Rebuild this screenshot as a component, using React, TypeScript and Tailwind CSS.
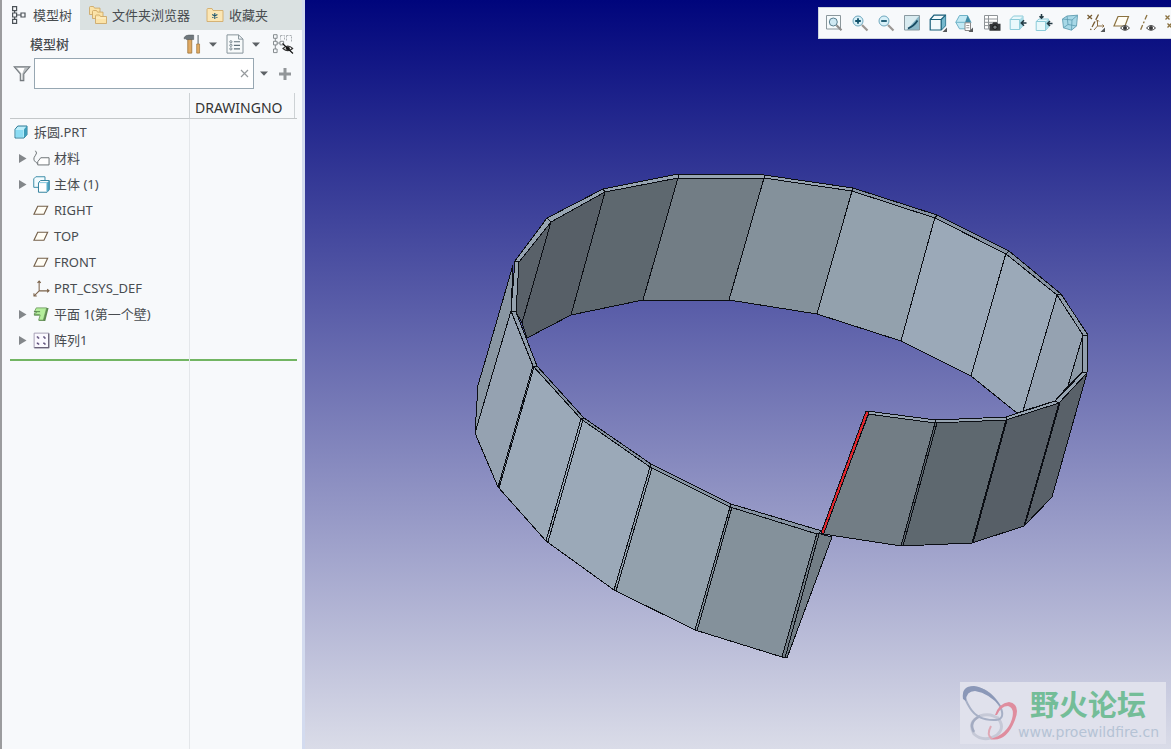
import type { ReactNode } from 'react';
import clsx from 'clsx';

interface IconProps {
  size?: number;
  children: ReactNode;
}

function Icon({ size = 18, children }: IconProps) {
  return (
    <svg width={size} height={size} viewBox="0 0 18 18" fill="none" className="block shrink-0">
      {children}
    </svg>
  );
}

function Caret() {
  return (
    <svg width="8" height="5" viewBox="0 0 8 5" className="block">
      <path d="M0 .5h8L4 4.8z" fill="#5c6165" />
    </svg>
  );
}

/* Panel icons */
const TreeTabIcon = () => (
  <Icon>
    <g stroke="#4c5358" strokeWidth="1.2">
      <path d="M2.6.6h4v4h-4zM2.6 7h4v4h-4zM2.6 13.4h4v4h-4zM11 7h4v4h-4zM4.6 4.6V7M4.6 11v2.4M6.6 9H11" />
    </g>
  </Icon>
);

const FoldersIcon = () => (
  <Icon>
    <g fill="#fbe3a8" stroke="#c9a25e" strokeWidth=".8">
      <path d="M.5 1.5q0-1 1-1h3l1 1.6H11v6.4H.5z" />
      <path d="M3.5 5.5q0-1 1-1h3l1 1.6H14v6.4H3.5z" />
      <path d="M6.5 10q0-1 1-1h3l1 1.5h6v7h-11z" />
    </g>
    <path d="M7 12h10" stroke="#fff3d0" />
  </Icon>
);

const FavoritesIcon = () => (
  <Icon>
    <path d="M1 3.5q0-1 1-1h4l1 2h10v11H1z" fill="#fbe6b4" stroke="#d3ad6b" strokeWidth=".9" />
    <path d="M8.8 7v6M6.2 8.5l5.2 3M11.4 8.5l-5.2 3" stroke="#1c5570" strokeWidth="1.1" />
  </Icon>
);

const ToolsIcon = () => (
  <Icon size={20}>
    <path d="M5.2 4.2h3.6v13H5.2z" fill="#e0aa63" stroke="#9b7136" strokeWidth=".7" />
    <path d="M2 4.5V3q1.5-2 4-2h4.5v4H4.5q-1 0-1.6-.9z" fill="#6f787d" stroke="#53595d" strokeWidth=".5" />
    <path d="M14.5 1v8" stroke="#7d868b" strokeWidth="1.2" />
    <path d="M13.2 9h2.6v8.2h-2.6z" fill="#e0aa63" stroke="#9b7136" strokeWidth=".6" />
  </Icon>
);

const ListIcon = () => (
  <Icon size={20}>
    <path d="M1.8.8h10.4l4 3.8v12.6H1.8z" fill="#f7fafb" stroke="#87949b" strokeWidth=".9" />
    <path d="M12.2.8v3.8h4" stroke="#87949b" strokeWidth=".9" />
    <path d="M8 7h5.5M8 10.2h5.5M8 13.4h5.5" stroke="#5f7079" />
    <g stroke="#5f7079" strokeWidth=".7">
      <circle cx="5.3" cy="7" r="1" />
      <circle cx="5.3" cy="10.2" r="1" />
      <circle cx="5.3" cy="13.4" r="1" />
    </g>
  </Icon>
);

const HideTreeIcon = () => (
  <svg width="22" height="20" viewBox="0 0 22 20" fill="none" className="block">
    <path d="M1.5.7h3.6v3.6H1.5zM1.5 7.3h3.6v3.6H1.5zM1.5 15h3.6v3.6H1.5zM8 7.3h3.6v3.6H8zM3.3 4.3v3M3.3 11v4M5 9h3" stroke="#7b8185" strokeWidth=".9" />
    <path d="M8.5 1.5h4v4M14.5 1.5h5v6M8.5 1.5v4M14.5 1.5v6" stroke="#a9aeb2" strokeDasharray="2 1" />
    <path d="M11 14.5q4.8-5 9.6 0q-4.8 4.4-9.6 0z" fill="#fff" stroke="#333" strokeWidth="1.2" />
    <circle cx="15.8" cy="14.3" r="2" fill="#222" />
    <path d="M10.5 9.5l10.5 10" stroke="#111" strokeWidth="1.1" />
  </svg>
);

const FilterIcon = () => (
  <Icon>
    <path d="M1.2 1.8h15.6l-6 7.2v6.6H7.3V9z" fill="#b9bec1" stroke="#73797d" strokeWidth="1.1" />
    <path d="M4 3h7.5L9.2 9v5.5h-.8V8.6z" fill="#fff" />
  </Icon>
);

/* Tree icons */
const PartIcon = () => (
  <svg width="14" height="14" viewBox="0 0 14 14" className="block">
    <path d="M1 4.3L3.8 1H13v8.6L10 13H1z" fill="#bdeefa" stroke="#2c7b96" />
    <path d="M10 4.3L13 1v8.6L10 13z" fill="#3d9dba" />
    <path d="M1.8 5h7.5v7.2H1.8z" fill="#8bdcf3" />
  </svg>
);

const MaterialIcon = () => (
  <Icon size={17}>
    <path d="M2.6.8q2.4 2.4 0 4.8-3.6 4.4.4 7.4l2 1.6" stroke="#666c70" />
    <path d="M8.2 8.2H17v7.6H5v-3.4z" fill="#fff" stroke="#666c70" />
  </Icon>
);

const BodyIcon = () => (
  <Icon size={17}>
    <path d="M.8 3L3 .8h9.7v9L10.5 12H.8z" fill="#f2fbfe" stroke="#3488a5" />
    <path d="M5.8 7L8 4.8h9.3v9.7l-2.4 2.7H5.8z" fill="#fff" stroke="#2b7c99" />
    <path d="M14.7 7.2L17 5v9.5l-2.3 2.4z" fill="#489fbd" />
    <path d="M6 7h8.7v9.5" stroke="#7fc5db" />
  </Icon>
);

const PlaneIcon = () => (
  <Icon size={17}>
    <path d="M5 4.5h10.5L11.6 13H1z" fill="#fffdf5" stroke="#74604a" strokeWidth="1.2" />
  </Icon>
);

const CsysIcon = () => (
  <Icon size={17}>
    <path d="M6.5 1v10.5H17M6.5 11.5L1 17M4.8 3l1.7-2 1.7 2M15 9.8l2 1.7-2 1.7M1 14v3h3" stroke="#7b6249" strokeWidth="1.1" />
  </Icon>
);

const WallIcon = () => (
  <Icon size={17}>
    <path d="M3.5 2H14.500L11 15H6l1.6-5.5H1.5v-2h2V6h-2z" fill="#b4ee9c" stroke="#6b9a5c" strokeWidth=".9" />
    <path d="M14.500 2h2L13 15.8H6.500l-.5-.8h5z" fill="#5d8a50" />
    <path d="M1 6h6.5M1 9.5h6" stroke="#55834a" />
  </Icon>
);

const PatternIcon = () => (
  <Icon size={17}>
    <path d="M1.2 1.2h15.6v15.6H1.2z" fill="#fbf9ff" stroke="#a39cb2" />
    <path d="M16.6 1.5v15.1H1.5" stroke="#696178" strokeWidth="1.3" />
    <path d="M4 4.6h1.6v1H6.6v1.6H5v-1H4zM10.8 4.6h1.6v1h1v1.6h-1.6v-1h-1zM4 11h1.6v1h1v1.6H5v-1H4zM10.8 11h1.6v1h1v1.6h-1.6v-1h-1z" fill="#5b4d78" />
  </Icon>
);

/* View toolbar icons */
const Corner = () => <path d="M18 13.5V18h-4.5z" fill="#55585b" />;

const toolbarGroups: { label: string; icon: ReactNode }[][] = [
  [
    {
      label: '重新调整',
      icon: (
        <Icon>
          <path d="M1.5 1.5h14v13.5h-14z" fill="#f6fbfc" stroke="#8b979c" />
          <circle cx="8.3" cy="8" r="4" fill="#cfe9f3" stroke="#5a7f8f" />
          <path d="M11.5 11.2l5 5" stroke="#8d8c8b" strokeWidth="2.2" />
        </Icon>
      ),
    },
    {
      label: '放大',
      icon: (
        <Icon>
          <circle cx="7" cy="7" r="5" fill="#d8f0f8" stroke="#6fa8be" />
          <path d="M4.2 7h5.6M7 4.2v5.6" stroke="#12526b" strokeWidth="1.8" />
          <path d="M11 11l5.5 5.5" stroke="#9b9793" strokeWidth="2.2" />
        </Icon>
      ),
    },
    {
      label: '缩小',
      icon: (
        <Icon>
          <circle cx="7" cy="7" r="5" fill="#d8f0f8" stroke="#6fa8be" />
          <path d="M4.2 7h5.6" stroke="#12526b" strokeWidth="1.8" />
          <path d="M11 11l5.5 5.5" stroke="#9b9793" strokeWidth="2.2" />
        </Icon>
      ),
    },
    {
      label: '重画',
      icon: (
        <Icon>
          <path d="M1.5 1.5h15v14.5h-15z" fill="#8cb9c8" stroke="#8b9ba2" />
          <path d="M2 2h14L4 15.5H2z" fill="#d9ebf0" />
          <path d="M5 14.5Q11 12 14.500 6.500" stroke="#174b63" strokeWidth="1.8" />
        </Icon>
      ),
    },
    {
      label: '显示样式',
      icon: (
        <Icon>
          <path d="M1.2 5.5L5 1.2h11.5v10.3L12.2 16H1.2z" fill="#f3fafc" stroke="#185e79" strokeWidth="1.2" />
          <path d="M12.2 5.5l4.3-4.3v10.3L12.2 16z" fill="#75b8cd" />
          <path d="M1.2 5.5h11V16M12.2 5.5l4.3-4.3" stroke="#185e79" strokeWidth="1.2" />
          <Corner />
        </Icon>
      ),
    },
    {
      label: '已保存方向',
      icon: (
        <Icon>
          <path d="M.8 8.3L4.5 1.5h8L16 8.3l-3.5 6.5h-8z" fill="#c3e9f4" stroke="#6fb3c8" />
          <path d="M.8 8.3H10" stroke="#6fb3c8" />
          <path d="M12.5 1.5L16 8.5h-6z" fill="#3f8ba6" />
          <path d="M10 8.8h5.5v7.7H10z" fill="#fff" stroke="#888" />
          <path d="M11.3 11.5h3M11.3 13.8h3" stroke="#999" />
          <Corner />
        </Icon>
      ),
    },
  ],
  [
    {
      label: '视图管理器',
      icon: (
        <Icon>
          <path d="M1.5 1.5h13v13.5h-13z" fill="#fff" />
          <path d="M1.5 1.5h13v13.5h-13zM1.5 5h13M1.5 8.3h13M1.5 11.6h7M5.5 1.5V15" stroke="#8f9498" />
          <path d="M6.5 9.8h2.7l1-1.6h3.6l1 1.6h2.7v7h-11z" fill="#343638" />
          <circle cx="12" cy="13.2" r="2.2" fill="#777c7f" stroke="#111" />
        </Icon>
      ),
    },
    {
      label: '截面',
      icon: (
        <Icon>
          <path d="M1.2 5.5L4.5 2H14v9.8L10.6 15.5H1.2z" fill="#e9f8fb" stroke="#8ccbd9" />
          <path d="M10.6 5.5L14 2v9.8l-3.4 3.7z" fill="#a8dbe6" />
          <path d="M1.2 5.5h9.4v10" stroke="#8ccbd9" />
          <path d="M17.5 9h-5M15 6.3L12.3 9l2.7 2.7" stroke="#243b45" strokeWidth="1.6" />
        </Icon>
      ),
    },
    {
      label: '平面截面',
      icon: (
        <Icon>
          <path d="M1.2 7.5L4 5h9.5v8l-3 3.5H1.2z" fill="#e9f8fb" stroke="#8ccbd9" />
          <path d="M10.5 7.5l3-2.5v8l-3 3.5z" fill="#a8dbe6" />
          <path d="M1.2 7.5h9.3v9" stroke="#8ccbd9" />
          <path d="M6.5 0v4M4.5 2.3l2 2 2-2M17.5 9.5h-5M15 7l-2.5 2.5L15 12" stroke="#243b45" strokeWidth="1.5" />
        </Icon>
      ),
    },
    {
      label: '透视图',
      icon: (
        <Icon>
          <path d="M1.5 5L6 2l10.5-.8-1 10.8-5 4.2-8-2.4z" fill="#a7d8e7" stroke="#6ba5b8" />
          <path d="M1.5 5L11 6l5.5-4.8M11 6l-.5 10M6 2l1 8.5-4.5 3.3M7 10.5l8.5 1.5" stroke="#5b9ab0" strokeWidth=".8" />
        </Icon>
      ),
    },
    {
      label: '基准显示过滤器',
      icon: (
        <Icon>
          <path d="M.5 1l4.5 4M5 1L.5 5M11.5.5L3.5 16" stroke="#765b32" strokeWidth="1.3" strokeDasharray="6 2" />
          <path d="M10.5 6v6H17M10.5 12L7 16M9 7.5L10.5 6 12 7.5M15.5 10.5L17 12l-1.5 1.5" stroke="#8b6e45" />
          <Corner />
        </Icon>
      ),
    },
    {
      label: '平面显示',
      icon: (
        <Icon>
          <path d="M5 2.5h10.5L12 12H1z" fill="#fffdf5" stroke="#8b7240" strokeWidth="1.2" />
          <path d="M7.5 14q4.5-5 9 0q-4.5 4.6-9 0z" fill="#fff" stroke="#444" />
          <circle cx="12" cy="13.9" r="2" fill="#383838" />
        </Icon>
      ),
    },
    {
      label: '轴显示',
      icon: (
        <Icon>
          <path d="M8 1L1.5 16" stroke="#8b7240" strokeWidth="1.3" strokeDasharray="5 2 2 2" />
          <path d="M7.5 14q4.5-5 9 0q-4.5 4.6-9 0z" fill="#fff" stroke="#444" />
          <circle cx="12" cy="13.9" r="2" fill="#383838" />
        </Icon>
      ),
    },
    {
      label: '点显示',
      icon: (
        <Icon>
          <path d="M.5 1.5l4 4M4.5 1.5l-4 4M2.5 9.5l4 4M6.5 9.5l-4 4" stroke="#8b7240" strokeWidth="1.3" />
        </Icon>
      ),
    },
  ],
];

const tabs = [
  { label: '模型树', icon: <TreeTabIcon />, active: true },
  { label: '文件夹浏览器', icon: <FoldersIcon />, active: false },
  { label: '收藏夹', icon: <FavoritesIcon />, active: false },
];

const treeItems = [
  { name: '材料', icon: <MaterialIcon />, expandable: true },
  { name: '主体 (1)', icon: <BodyIcon />, expandable: true },
  { name: 'RIGHT', icon: <PlaneIcon />, expandable: false },
  { name: 'TOP', icon: <PlaneIcon />, expandable: false },
  { name: 'FRONT', icon: <PlaneIcon />, expandable: false },
  { name: 'PRT_CSYS_DEF', icon: <CsysIcon />, expandable: false },
  { name: '平面 1(第一个壁)', icon: <WallIcon />, expandable: true },
  { name: '阵列1', icon: <PatternIcon />, expandable: true },
];

// Faces of the ring, far side first
const faces: [string, string][] = [
  ['519,262 551,222 522,323 516,312', '#596169'],
  ['551,222 605,192 571,315 527,338 522,323', '#575f67'],
  ['605,192 678,178 643,300 571,315', '#5e686f'],
  ['678,178 764,178 729,300 643,300', '#727d85'],
  ['764,178 852,191 817,314 729,300', '#84919b'],
  ['852,191 935,217 901,341 817,314', '#93a1ad'],
  ['935,217 1006,253 971,376 901,341', '#9ba9b8'],
  ['1006,253 1057,295 1023,411 1017,413 971,376', '#9ba9b8'],
  ['1057,295 1083,335 1068,386 1055,401 1023,411', '#95a2b1'],
  ['1083,335 1082,372 1068,386', '#8c99a6'],
  ['1083,335 1088,335 1087,373 1082,373', '#929fad'],
  // top rim, far side
  ['515,261 547,218 551,222 519,262', '#98a5b2'],
  ['547,218 603,189 605,192 551,222', '#98a5b2'],
  ['603,189 678,174 678,178 605,192', '#98a5b2'],
  ['678,174 764,175 764,178 678,178', '#98a5b2'],
  ['764,175 853,188 852,191 764,178', '#98a5b2'],
  ['853,188 937,215 935,218 852,191', '#8794a3'],
  ['937,215 1009,251 1006,254 935,218', '#8794a3'],
  ['1009,251 1061,294 1057,295 1006,254', '#8794a3'],
  ['1061,294 1088,335 1083,335 1057,295', '#919eac'],
  // near side, left run
  ['513,265 511,311 475,433 478,385 484,365', '#8996a2'],
  ['515,261 519,262 516,312 511,311', '#95a2ae'],
  ['511,311 533,366 498,487 475,433', '#95a2b1'],
  ['533,366 581,419 546,541 498,487', '#9ba9b8'],
  ['581,419 650,467 614,590 546,541', '#9ba9b8'],
  ['650,467 730,507 695,630 614,590', '#93a1ad'],
  ['730,507 817,533 782,657 695,630', '#84919b'],
  ['817,533 832,537 787,658 782,657', '#727d85'],
  ['511,311 516,312 537,366 533,366', '#919eac'],
  ['533,366 537,366 584,418 581,419', '#8794a3'],
  ['581,419 584,418 651,464 650,467', '#8794a3'],
  ['650,467 651,464 731,504 730,507', '#8794a3'],
  ['730,507 731,504 822,531 817,534', '#8794a3'],
  // near side, right run
  ['869,413 935,423 901,546 823,534', '#727d85'],
  ['935,423 1006,420 972,543 901,546', '#5e686f'],
  ['1006,420 1059,403 1024,526 972,543', '#575f67'],
  ['1059,403 1087,373 1052,497 1024,526', '#596169'],
  ['867,411 936,420 935,423 868,414', '#98a5b2'],
  ['936,420 1006,417 1006,420 935,423', '#98a5b2'],
  ['1006,417 1055,401 1059,403 1006,420', '#98a5b2'],
  ['1055,401 1083,372 1087,373 1059,403', '#98a5b2'],
];

// Second line of every bend on the near side
const bends = [
  'M534 367L499 488',
  'M583 420L548 542',
  'M652 468L616 591',
  'M732 507L697 631',
  'M819 534L785 658',
  'M937 423L903 546',
  'M1007 420L973 543',
  'M1060 403L1025 525',
];

function ModelView() {
  return (
    <svg viewBox="305 0 866 749" className="block h-full w-full" role="img" aria-label="拆圆.PRT">
      <g stroke="#0b0e14" strokeWidth="1" strokeLinejoin="round" shapeRendering="crispEdges">
        {faces.map(([points, fill]) => (
          <polygon key={points} points={points} fill={fill} />
        ))}
        {bends.map((d) => (
          <path key={d} d={d} />
        ))}
        <polygon points="866,411 869,412 824,533 821,533" fill="#e0262e" />
      </g>
    </svg>
  );
}

function Watermark() {
  return (
    <div className="absolute right-[5px] bottom-[5px] flex h-[62px] w-[206px] items-start bg-[#e0e1ec]">
      <svg width="58" height="62" viewBox="0 0 58 62" fill="none" className="shrink-0">
        <path d="M37 35Q46 45 37 53Q24 61 14 52Q7 40 20 34Q31 30 40 38" stroke="#c6c9d7" strokeWidth="3" />
        <path d="M14 50Q8 40 20 34" stroke="#a3abc1" strokeWidth="2.5" />
        <path d="M10 26Q-2 7 12 5.5Q28 5 40 24Q46 37 36 38Q18 39 10 26z" stroke="#a7b0c6" strokeWidth="2" />
        <path d="M3 17Q1 4 14 4Q30 6 42 26Q29 11 15 9Q6 9 6 19z" fill="#8b98b8" />
        <path d="M35 33Q39 21 49 20Q61 22 55 38Q46 61 30 57Q47 53 52 37Q55 26 48 24Q41 24 37 33z" fill="#df8d9e" />
        <path d="M32 57q-6-4-1-13" stroke="#dfa8b5" strokeWidth="2" />
      </svg>
      <div className="flex flex-col whitespace-nowrap">
        <span className="pl-3 font-['Noto_Sans_CJK_SC',sans-serif] text-[29px] leading-[42px] font-bold text-[#74bd98]">
          野火论坛
        </span>
        <span className="font-['DejaVu_Sans',sans-serif] text-sm leading-4 text-[#b5c3d5]">www.proewildfire.cn</span>
      </div>
    </div>
  );
}

function Sidebar() {
  return (
    <aside className="flex w-[305px] shrink-0 flex-col border-r-[3px] border-l-2 border-r-[#d3dbef] border-l-[#9b9c9e] bg-[#f7f9fb]">
      <div role="tablist" className="flex h-[30px] shrink-0 bg-[#dae1e1]">
        {tabs.map((tab) => (
          <button
            key={tab.label}
            role="tab"
            aria-selected={tab.active}
            className={clsx(
              'flex items-center gap-[5px] whitespace-nowrap',
              tab.active ? 'bg-[#f7f9fb] pr-2 pl-2' : 'pr-[7px] pl-[9px]'
            )}
          >
            {tab.icon}
            {tab.label}
          </button>
        ))}
      </div>

      <div className="flex h-7 shrink-0 items-center pr-2 pl-7">
        <h2 className="flex-1 font-medium">模型树</h2>
        <div className="flex items-center gap-2">
          <button aria-label="设置" className="flex items-center gap-[7px]">
            <ToolsIcon />
            <Caret />
          </button>
          <button aria-label="显示" className="flex items-center gap-[7px]">
            <ListIcon />
            <Caret />
          </button>
          <button aria-label="隐藏项" className="pl-1">
            <HideTreeIcon />
          </button>
        </div>
      </div>

      <div className="flex h-[31px] shrink-0 items-center pr-[11px] pl-[11px]">
        <button aria-label="过滤器">
          <FilterIcon />
        </button>
        <div className="relative ml-[3px] h-full flex-1">
          <input
            type="text"
            aria-label="搜索"
            className="block h-full w-full border border-[#97a7b2] bg-white pr-5 pl-2 outline-none"
          />
          <button aria-label="清除" className="absolute top-0 right-[5px] flex h-full items-center">
            <svg width="9" height="9" viewBox="0 0 9 9">
              <path d="M1 1l7 7M8 1L1 8" stroke="#969a9d" strokeWidth="1.2" />
            </svg>
          </button>
        </div>
        <button aria-label="搜索选项" className="px-[6px]">
          <Caret />
        </button>
        <button aria-label="添加" className="ml-[5px]">
          <svg width="12" height="12" viewBox="0 0 12 12">
            <path d="M6 0v12M0 6h12" stroke="#929699" strokeWidth="3" />
          </svg>
        </button>
      </div>

      <div className="flex flex-1 flex-col pt-1 pr-[5px] pl-2">
        <table className="w-full table-fixed border-separate border-spacing-0">
          <colgroup>
            <col className="w-[180px]" />
            <col />
          </colgroup>
          <thead>
            <tr className="h-[26px]">
              <th aria-label="名称" className="border-r border-b border-r-[#cdd2d5] border-b-[#c3c7c9]" />
              <th className="border-b border-b-[#c3c7c9] p-0 text-left text-sm leading-5 font-normal text-[#333]">
                <div className="mr-[2px] h-[25px] border-r border-[#cdd2d5] pt-[5px] pl-[5px]">DRAWINGNO</div>
              </th>
            </tr>
          </thead>
          <tbody>
            <tr className="h-[26px]">
              <td className="border-r border-[#e4e7ea] p-0">
                <div className="flex items-center gap-[6px] pl-1">
                  <PartIcon />
                  拆圆.PRT
                </div>
              </td>
              <td />
            </tr>
            {treeItems.map((item) => (
              <tr key={item.name} className="h-[26px]">
                <td className="border-r border-[#e4e7ea] p-0">
                  <div className="flex items-center pl-[9px]">
                    <span className="w-[14px]">
                      {item.expandable && (
                        <button aria-label="展开" className="block">
                          <svg width="8" height="9" viewBox="0 0 8 9" className="block">
                            <path d="M0 0l7.5 4.5L0 9z" fill="#83878a" />
                          </svg>
                        </button>
                      )}
                    </span>
                    <span className="mr-1">{item.icon}</span>
                    {item.name}
                  </div>
                </td>
                <td />
              </tr>
            ))}
          </tbody>
        </table>
        <div className="flex flex-1">
          <div className="w-[180px] border-r border-[#e4e7ea] pt-[6px]">
            <div className="h-[2px] bg-[#72b562]" />
          </div>
          <div className="flex-1 pt-[6px]">
            <div className="h-[2px] bg-[#72b562]" />
          </div>
        </div>
      </div>
    </aside>
  );
}

export default function App() {
  return (
    <div className="flex h-screen overflow-hidden font-['Noto_Sans','Noto_Sans_CJK_SC',sans-serif] text-[13px] leading-5 text-[#484c50]">
      <Sidebar />
      <main className="relative min-w-0 flex-1 bg-linear-to-b/srgb from-[#00057c] to-[#dadce8]">
        <ModelView />
        <div
          role="toolbar"
          className="absolute top-[7px] right-0 left-[513px] flex h-8 items-center gap-[2px] overflow-hidden border border-r-0 border-[#cdd3de] bg-[#f7f9fb] pl-[2px]"
        >
          {toolbarGroups.map((group) => (
            <div key={group[0].label} className="flex h-full shrink-0">
              {group.map((item) => (
                <button key={item.label} aria-label={item.label} className="flex h-full w-[26px] items-center justify-center">
                  {item.icon}
                </button>
              ))}
            </div>
          ))}
        </div>
        <Watermark />
      </main>
    </div>
  );
}
